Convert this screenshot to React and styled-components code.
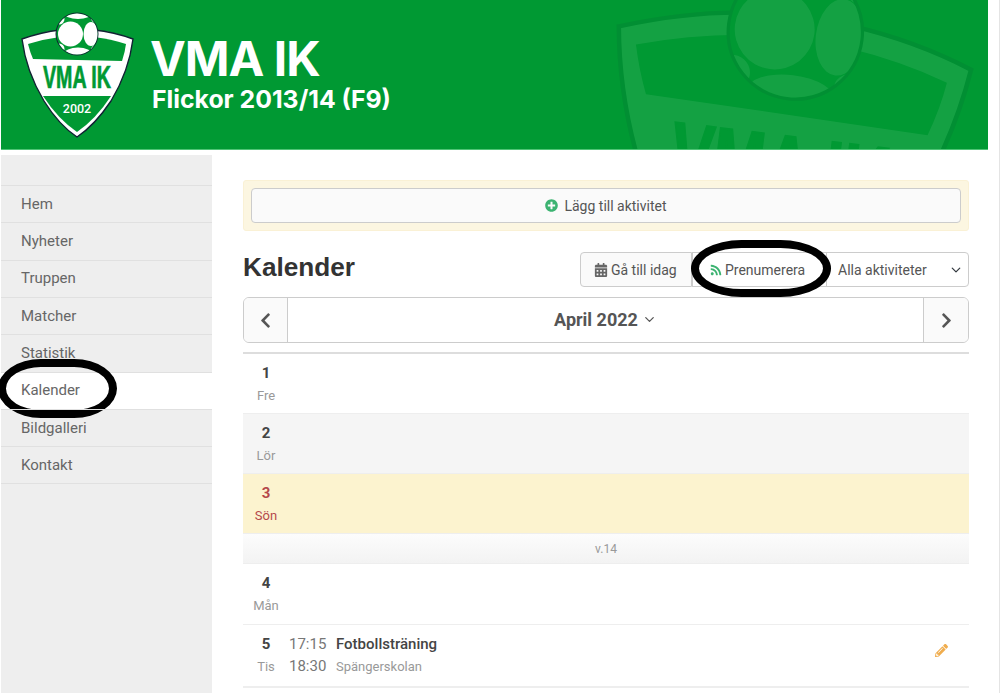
import styled, { createGlobalStyle } from "styled-components";
import {
  FaCalendarAlt,
  FaChevronLeft,
  FaChevronRight,
  FaPencilAlt,
  FaPlusCircle,
  FaRss,
} from "react-icons/fa";
import { LuChevronDown } from "react-icons/lu";

const GRON = "#009933";

const menyval = ["Hem", "Nyheter", "Truppen", "Matcher", "Statistik", "Kalender", "Bildgalleri", "Kontakt"];

function Klubbmarke({ id, className }) {
  return (
    <svg className={className} viewBox="20 8 116 132">
      <defs>
        <clipPath id={id}>
          <circle cx="77" cy="33" r="20.5" />
        </clipPath>
      </defs>
      <path
        d="M22 38 Q42 31 60 29 L94 29 Q114 31 133 38 Q129 70 111 100 Q95 124 77 136 Q59 124 44 100 Q26 70 22 38 Z"
        fill="#fff"
        stroke="#123"
        strokeWidth="1.4"
      />
      <path
        d="M28 43 Q44 38 60 36 L94 36 Q111 38 126 43 Q125 51 122 60 L33 58 Q30 51 28 43 Z"
        fill={GRON}
      />
      <path d="M43 95 L111 95 Q96 118 77 131 Q58 118 43 95 Z" fill={GRON} />
      <text
        x="43"
        y="87"
        textLength="68"
        lengthAdjust="spacingAndGlyphs"
        fontFamily="Liberation Sans, sans-serif"
        fontWeight="700"
        fontSize="31"
        fill={GRON}
        stroke={GRON}
        strokeWidth="0.7"
      >
        VMA IK
      </text>
      <text
        x="77"
        y="112"
        textAnchor="middle"
        fontFamily="Roboto, sans-serif"
        fontWeight="500"
        fontSize="12.5"
        fill="#fff"
      >
        2002
      </text>
      <circle cx="77" cy="33" r="21" fill={GRON} stroke="#123" strokeWidth="1" />
      <g clipPath={`url(#${id})`} fill="#fff">
        <circle cx="70.5" cy="33" r="12.5" />
        <ellipse cx="91" cy="33" rx="7.5" ry="12" />
        <ellipse cx="78" cy="12" rx="14" ry="6" />
        <ellipse cx="78" cy="53" rx="14" ry="6.5" />
        <circle cx="59" cy="18" r="5.5" />
        <circle cx="59" cy="48" r="5.5" />
        <circle cx="96" cy="17" r="5" />
        <circle cx="96" cy="49" r="5" />
      </g>
    </svg>
  );
}

function Dag({ nummer, namn, $typ, children }) {
  return (
    <Rad $typ={$typ}>
      <Datum>
        <strong>{nummer}</strong>
        <span>{namn}</span>
      </Datum>
      {children}
    </Rad>
  );
}

export default function App() {
  return (
    <>
      <GlobalStyle />
      <Sida>
        <Topp>
          <Vattenstampel id="stampel" />
          <Logo id="logo" />
          <Rubriker>
            <h1>VMA IK</h1>
            <h2>Flickor 2013/14 (F9)</h2>
          </Rubriker>
        </Topp>
        <Kropp>
          <Sidomeny>
            {menyval.map((namn) => (
              <Menylank key={namn} $aktiv={namn === "Kalender"}>
                {namn}
                {namn === "Kalender" && <MenyMarkering />}
              </Menylank>
            ))}
          </Sidomeny>
          <Innehall>
            <Ruta>
              <LaggTill>
                <FaPlusCircle size={13} color="#3cb371" />
                Lägg till aktivitet
              </LaggTill>
            </Ruta>
            <Verktyg>
              <h2>Kalender</h2>
              <Knappar>
                <Knapp>
                  <FaCalendarAlt size={14} color="#666" />
                  Gå till idag
                </Knapp>
                <Knapp $mitten>
                  <FaRss size={12} color="#3cb371" />
                  Prenumerera
                  <KnappMarkering />
                </Knapp>
                <Val defaultValue="alla">
                  <option value="alla">Alla aktiviteter</option>
                </Val>
              </Knappar>
            </Verktyg>
            <Manad>
              <Pil>
                <FaChevronLeft size={17} />
              </Pil>
              <ManadNamn>
                April 2022
                <LuChevronDown size={15} />
              </ManadNamn>
              <Pil $hoger>
                <FaChevronRight size={17} />
              </Pil>
            </Manad>
            <Lista>
              <Dag nummer="1" namn="Fre" />
              <Dag nummer="2" namn="Lör" $typ="helg" />
              <Dag nummer="3" namn="Sön" $typ="idag" />
              <Vecka>v.14</Vecka>
              <Dag nummer="4" namn="Mån" $typ="lang" />
              <Dag nummer="5" namn="Tis" $typ="aktivitet">
                <Tider>
                  <span>17:15</span>
                  <span>18:30</span>
                </Tider>
                <Aktivitet>
                  <strong>Fotbollsträning</strong>
                  <span>Spängerskolan</span>
                </Aktivitet>
                <Penna>
                  <FaPencilAlt size={13} />
                </Penna>
              </Dag>
            </Lista>
          </Innehall>
        </Kropp>
      </Sida>
    </>
  );
}

const GlobalStyle = createGlobalStyle`
  html, body {
    margin: 0;
    height: 100%;
    overflow: hidden;
    background: #fff;
  }
  body {
    font-family: Roboto, "Liberation Sans", sans-serif;
    font-size: 15px;
    color: #555;
  }
  * {
    box-sizing: border-box;
  }
`;

const Sida = styled.div`
  height: 693px;
  padding: 0 11px 0 1px;
  border-right: 1px solid #e4e4e4;
`;

const Topp = styled.header`
  position: relative;
  height: 150px;
  padding-left: 19px;
  display: flex;
  align-items: center;
  gap: 16px;
  overflow: hidden;
  background-color: ${GRON};
  border-bottom: 1px solid #4fc476;
`;

const Logo = styled(Klubbmarke)`
  position: relative;
  flex: none;
  width: 116px;
  height: 132px;
`;

const Vattenstampel = styled(Klubbmarke)`
  position: absolute;
  left: 612px;
  top: -48px;
  width: 371px;
  height: 422px;
  opacity: 0.08;
  transform: rotate(7deg);
  transform-origin: 182px 80px;
`;

const Rubriker = styled.div`
  position: relative;
  padding-bottom: 2px;
  color: #fff;
  font-family: Inter, "Liberation Sans", sans-serif;

  h1 {
    margin: 0 0 0 -2px;
    font-size: 48px;
    line-height: 50px;
    font-weight: 700;
    letter-spacing: -1px;
  }

  h2 {
    margin: 0;
    font-size: 24.8px;
    line-height: 30px;
    font-weight: 700;
  }
`;

const Kropp = styled.div`
  display: flex;
  height: 543px;
`;

const Sidomeny = styled.nav`
  flex: none;
  width: 211px;
  margin-top: 5px;
  padding-top: 30px;
  background-color: #eee;
`;

const Menylank = styled.a`
  position: relative;
  display: block;
  height: 37.35px;
  padding: 7.5px 20px 0;
  font-size: 15px;
  line-height: 20px;
  color: #666;
  border-top: 1px solid #e0e0e0;
  background-color: ${(p) => (p.$aktiv ? "#fff" : "transparent")};

  &:last-child {
    height: 38px;
    border-bottom: 1px solid #e0e0e0;
  }
`;

const Markering = styled.span`
  position: absolute;
  border: 8px solid #000;
  border-radius: 36% / 50%;
  pointer-events: none;
`;

const MenyMarkering = styled(Markering)`
  left: -3px;
  top: -14px;
  width: 119px;
  height: 59px;
`;

const KnappMarkering = styled(Markering)`
  left: -2px;
  top: -13px;
  width: 140px;
  height: 57px;
`;

const Innehall = styled.main`
  flex: 1;
  min-width: 0;
  padding: 30px 19px 0 31px;
`;

const Ruta = styled.div`
  height: 51px;
  padding: 7px;
  background-color: #fcf6e1;
  border: 1px solid #faf1d5;
  border-radius: 3px;
`;

const LaggTill = styled.button`
  width: 100%;
  height: 35px;
  display: flex;
  align-items: center;
  justify-content: center;
  gap: 6px;
  font: inherit;
  font-size: 14px;
  color: #555;
  background-color: #fafafa;
  border: 1px solid #ccc;
  border-radius: 4px;
`;

const Verktyg = styled.div`
  height: 66px;
  padding-top: 21px;
  display: flex;
  align-items: flex-start;
  justify-content: space-between;

  h2 {
    margin: 0;
    font-family: "Liberation Sans", sans-serif;
    font-size: 26.2px;
    line-height: 30px;
    font-weight: 700;
    color: #333;
  }
`;

const Knappar = styled.div`
  display: flex;
  height: 35px;
`;

const Knapp = styled.button`
  position: relative;
  display: flex;
  align-items: center;
  gap: 3px;
  height: 35px;
  width: ${(p) => (p.$mitten ? "135px" : "112px")};
  padding: 0 0 0 ${(p) => (p.$mitten ? "17px" : "13px")};
  font: inherit;
  font-size: 14px;
  color: #555;
  background-color: ${(p) => (p.$mitten ? "#fff" : "#fafafa")};
  border: 1px solid #ccc;
  border-radius: ${(p) => (p.$mitten ? "0" : "4px 0 0 4px")};
`;

const Val = styled.select`
  width: 143px;
  height: 35px;
  margin-left: -1px;
  padding: 0 0 0 11px;
  font: inherit;
  font-size: 14px;
  color: #555;
  background: #fff
    url("data:image/svg+xml,%3csvg xmlns='http://www.w3.org/2000/svg' viewBox='0 0 16 16'%3e%3cpath fill='none' stroke='%23343a40' stroke-linecap='round' stroke-linejoin='round' stroke-width='2' d='M2 5l6 6 6-6'/%3e%3c/svg%3e")
    no-repeat right 7px center / 10px 10px;
  border: 1px solid #ccc;
  border-radius: 0 4px 4px 0;
  appearance: none;
`;

const Manad = styled.div`
  height: 46px;
  display: flex;
  background-color: #fff;
  border: 1px solid #ccc;
  border-radius: 6px;
  overflow: hidden;
`;

const Pil = styled.div`
  flex: none;
  width: ${(p) => (p.$hoger ? "45px" : "44px")};
  display: flex;
  align-items: center;
  justify-content: center;
  color: #555;
  background-color: #fafafa;
  ${(p) => (p.$hoger ? "border-left" : "border-right")}: 1px solid #ccc;
`;

const ManadNamn = styled.div`
  flex: 1;
  display: flex;
  align-items: center;
  justify-content: center;
  gap: 4px;
  padding-bottom: 1px;
  font-size: 18px;
  font-weight: 700;
  color: #555;
`;

const Lista = styled.div`
  margin-top: 9px;
  border-top: 2px solid #ddd;
`;

const Rad = styled.div`
  display: flex;
  height: ${(p) => (p.$typ === "aktivitet" ? "63px" : p.$typ === "lang" ? "61px" : "60px")};
  border-bottom: ${(p) => (p.$typ === "aktivitet" ? "2px" : "1px")} solid #eee;
  background-color: ${(p) =>
    p.$typ === "helg" ? "#f5f5f5" : p.$typ === "idag" ? "#fcf3cf" : "#fff"};
  color: ${(p) => (p.$typ === "idag" ? "#b5484b" : "#999")};

  strong {
    color: ${(p) => (p.$typ === "idag" ? "#b5484b" : "#444")};
  }
`;

const Datum = styled.div`
  flex: none;
  width: 46px;
  padding-top: 10px;
  display: flex;
  flex-direction: column;
  align-items: center;
  gap: 3px;
  font-size: 13px;
  line-height: 19px;

  strong {
    font-size: 15px;
    line-height: 19px;
    font-weight: 700;
  }
`;

const Vecka = styled.div`
  height: 30px;
  display: flex;
  align-items: center;
  justify-content: center;
  font-size: 12px;
  color: #999;
  background: linear-gradient(#fcfcfc, #f3f3f3);
  border-bottom: 1px solid #eee;
`;

const Tider = styled.div`
  flex: none;
  width: 47px;
  padding: 10px 0 0;
  display: flex;
  flex-direction: column;
  gap: 3px;
  font-size: 15px;
  line-height: 19px;
  color: #777;
`;

const Aktivitet = styled.div`
  flex: 1;
  padding-top: 10px;
  display: flex;
  flex-direction: column;
  gap: 3px;
  font-size: 13px;
  line-height: 19px;
  color: #999;

  strong {
    font-size: 15px;
    font-weight: 500;
  }
`;

const Penna = styled.div`
  flex: none;
  width: 35px;
  padding: 18px 0 0 1px;
  color: #f0ad4e;
`;
